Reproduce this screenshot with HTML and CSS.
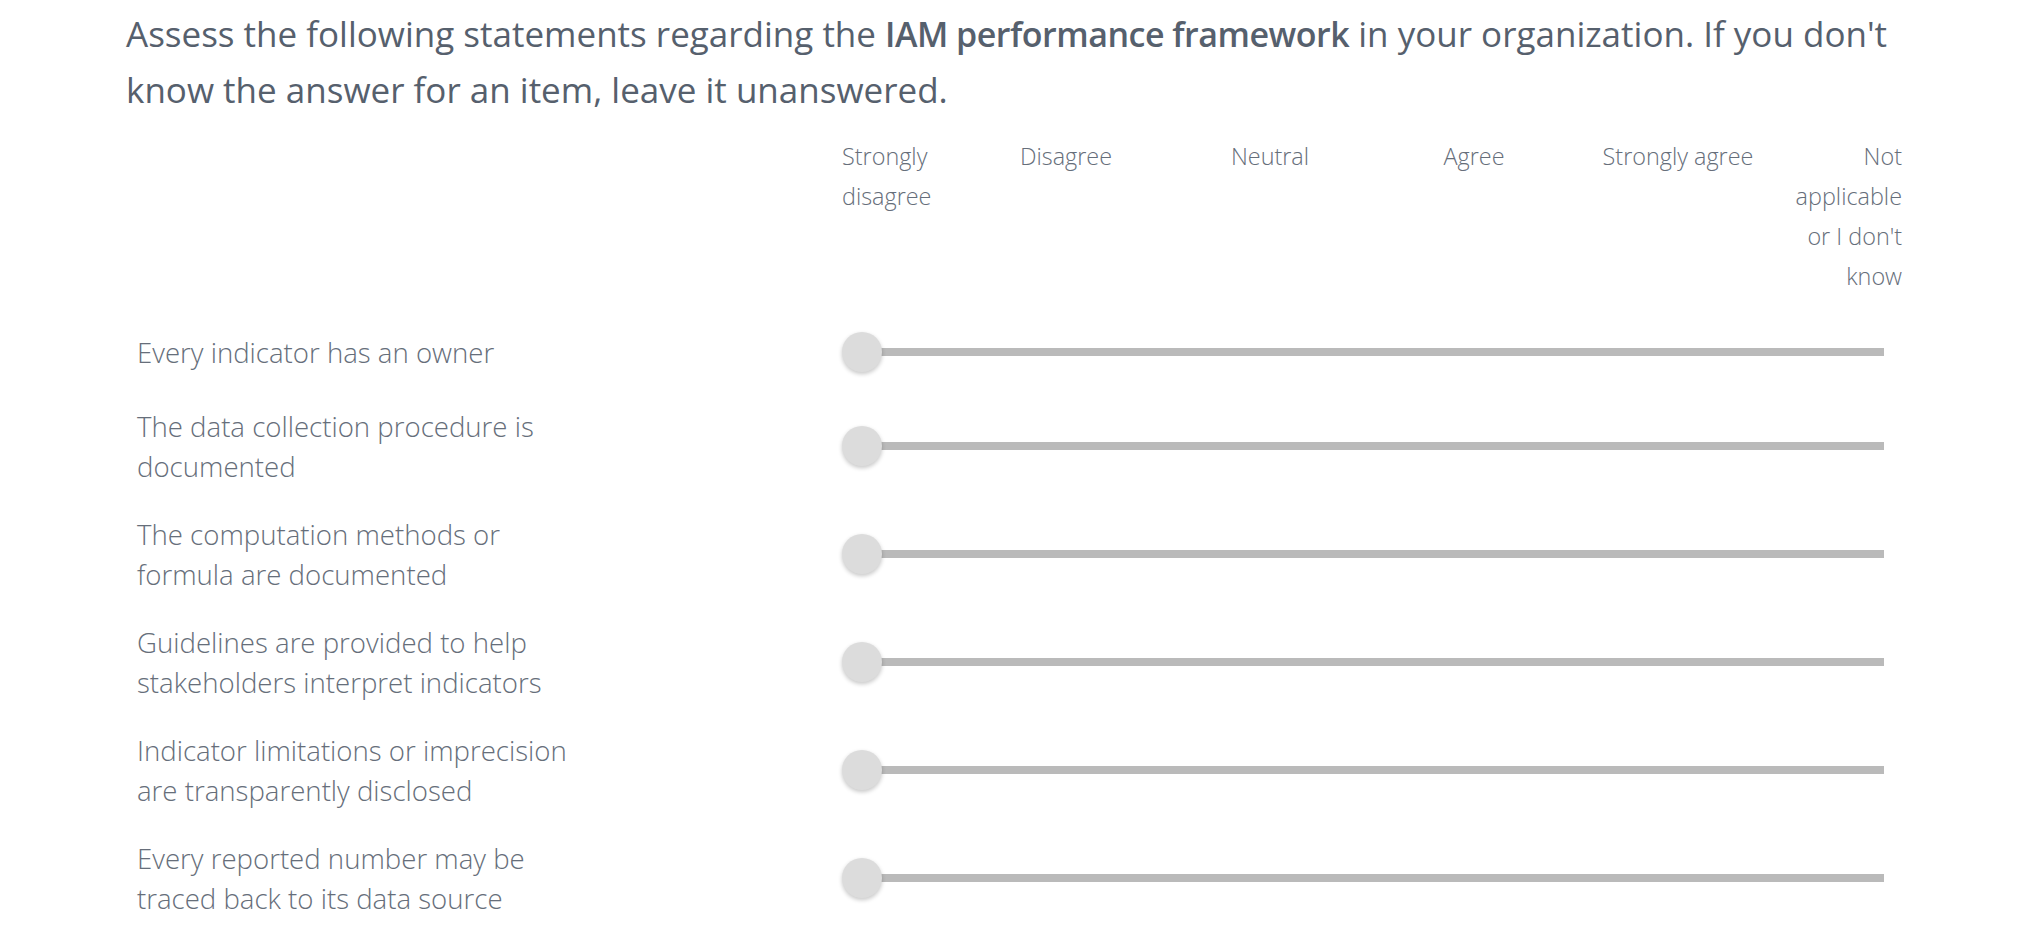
FILE: index.html
```html
<!DOCTYPE html>
<html lang="en">
<head>
<meta charset="utf-8">
<title>IAM performance framework</title>
<link rel="stylesheet" href="styles.css">
</head>
<body>
<main class="survey">
  <p class="intro">Assess the following statements regarding the <strong>IAM performance framework</strong> in your organization. If you don't know the answer for an item, leave it unanswered.</p>
  <div class="matrix">
    <div class="head">
      <div class="head-spacer"></div>
      <div class="ticks">
        <span class="tick tick-first">Strongly disagree</span>
        <span class="tick">Disagree</span>
        <span class="tick">Neutral</span>
        <span class="tick">Agree</span>
        <span class="tick">Strongly agree</span>
        <span class="tick tick-last">Not applicable or I don't know</span>
      </div>
    </div>
    <div class="row">
      <div class="label">Every indicator has an owner</div>
      <div class="slider"><div class="track"></div><div class="thumb"></div></div>
    </div>
    <div class="row">
      <div class="label">The data collection procedure is documented</div>
      <div class="slider"><div class="track"></div><div class="thumb"></div></div>
    </div>
    <div class="row">
      <div class="label">The computation methods or formula are documented</div>
      <div class="slider"><div class="track"></div><div class="thumb"></div></div>
    </div>
    <div class="row">
      <div class="label">Guidelines are provided to help stakeholders interpret indicators</div>
      <div class="slider"><div class="track"></div><div class="thumb"></div></div>
    </div>
    <div class="row">
      <div class="label">Indicator limitations or imprecision are transparently disclosed</div>
      <div class="slider"><div class="track"></div><div class="thumb"></div></div>
    </div>
    <div class="row">
      <div class="label">Every reported number may be traced back to its data source</div>
      <div class="slider"><div class="track"></div><div class="thumb"></div></div>
    </div>
  </div>
</main>
</body>
</html>
```

FILE: styles.css
```css
html, body {
  margin: 0;
  padding: 0;
  background: #ffffff;
}

body {
  font-family: "Open Sans", "Noto Sans", "Liberation Sans", sans-serif;
  color: #56606d;
}

.survey {
  width: 1784px;
  margin: 0 auto;
}

.intro {
  margin: 0;
  padding-top: 6px;
  font-size: 35px;
  line-height: 56px;
  font-weight: 400;
  color: #56606d;
}

.intro strong {
  font-weight: 600;
  font-size: 34px;
  letter-spacing: -0.5px;
}

.matrix {
  margin-top: 18px;
}

.head,
.row {
  display: grid;
  grid-template-columns: 716px 1060px;
}

.head {
  margin-bottom: 16px;
}

.ticks {
  display: grid;
  grid-template-columns: 122px repeat(4, 204px) 122px;
  align-items: start;
  font-size: 23.4px;
  line-height: 40px;
  font-weight: 300;
  color: #666e7a;
}

.tick {
  text-align: center;
}

.tick-first {
  text-align: left;
}

.tick-last {
  text-align: right;
}

.row {
  align-items: center;
  padding: 14px 0;
}

.label {
  padding-left: 11px;
  max-width: 452px;
  font-size: 27.6px;
  line-height: 40px;
  font-weight: 300;
  color: #666e7a;
}

.slider {
  position: relative;
  height: 52px;
  display: flex;
  align-items: center;
}

.track {
  margin-left: 20px;
  width: 1022px;
  height: 8px;
  background: #bababa;
}

.thumb {
  position: absolute;
  left: 0;
  top: 6px;
  width: 40px;
  height: 40px;
  border-radius: 50%;
  background: #dcdcdc;
  box-shadow: 0 2px 4px rgba(0, 0, 0, 0.22);
}
```
